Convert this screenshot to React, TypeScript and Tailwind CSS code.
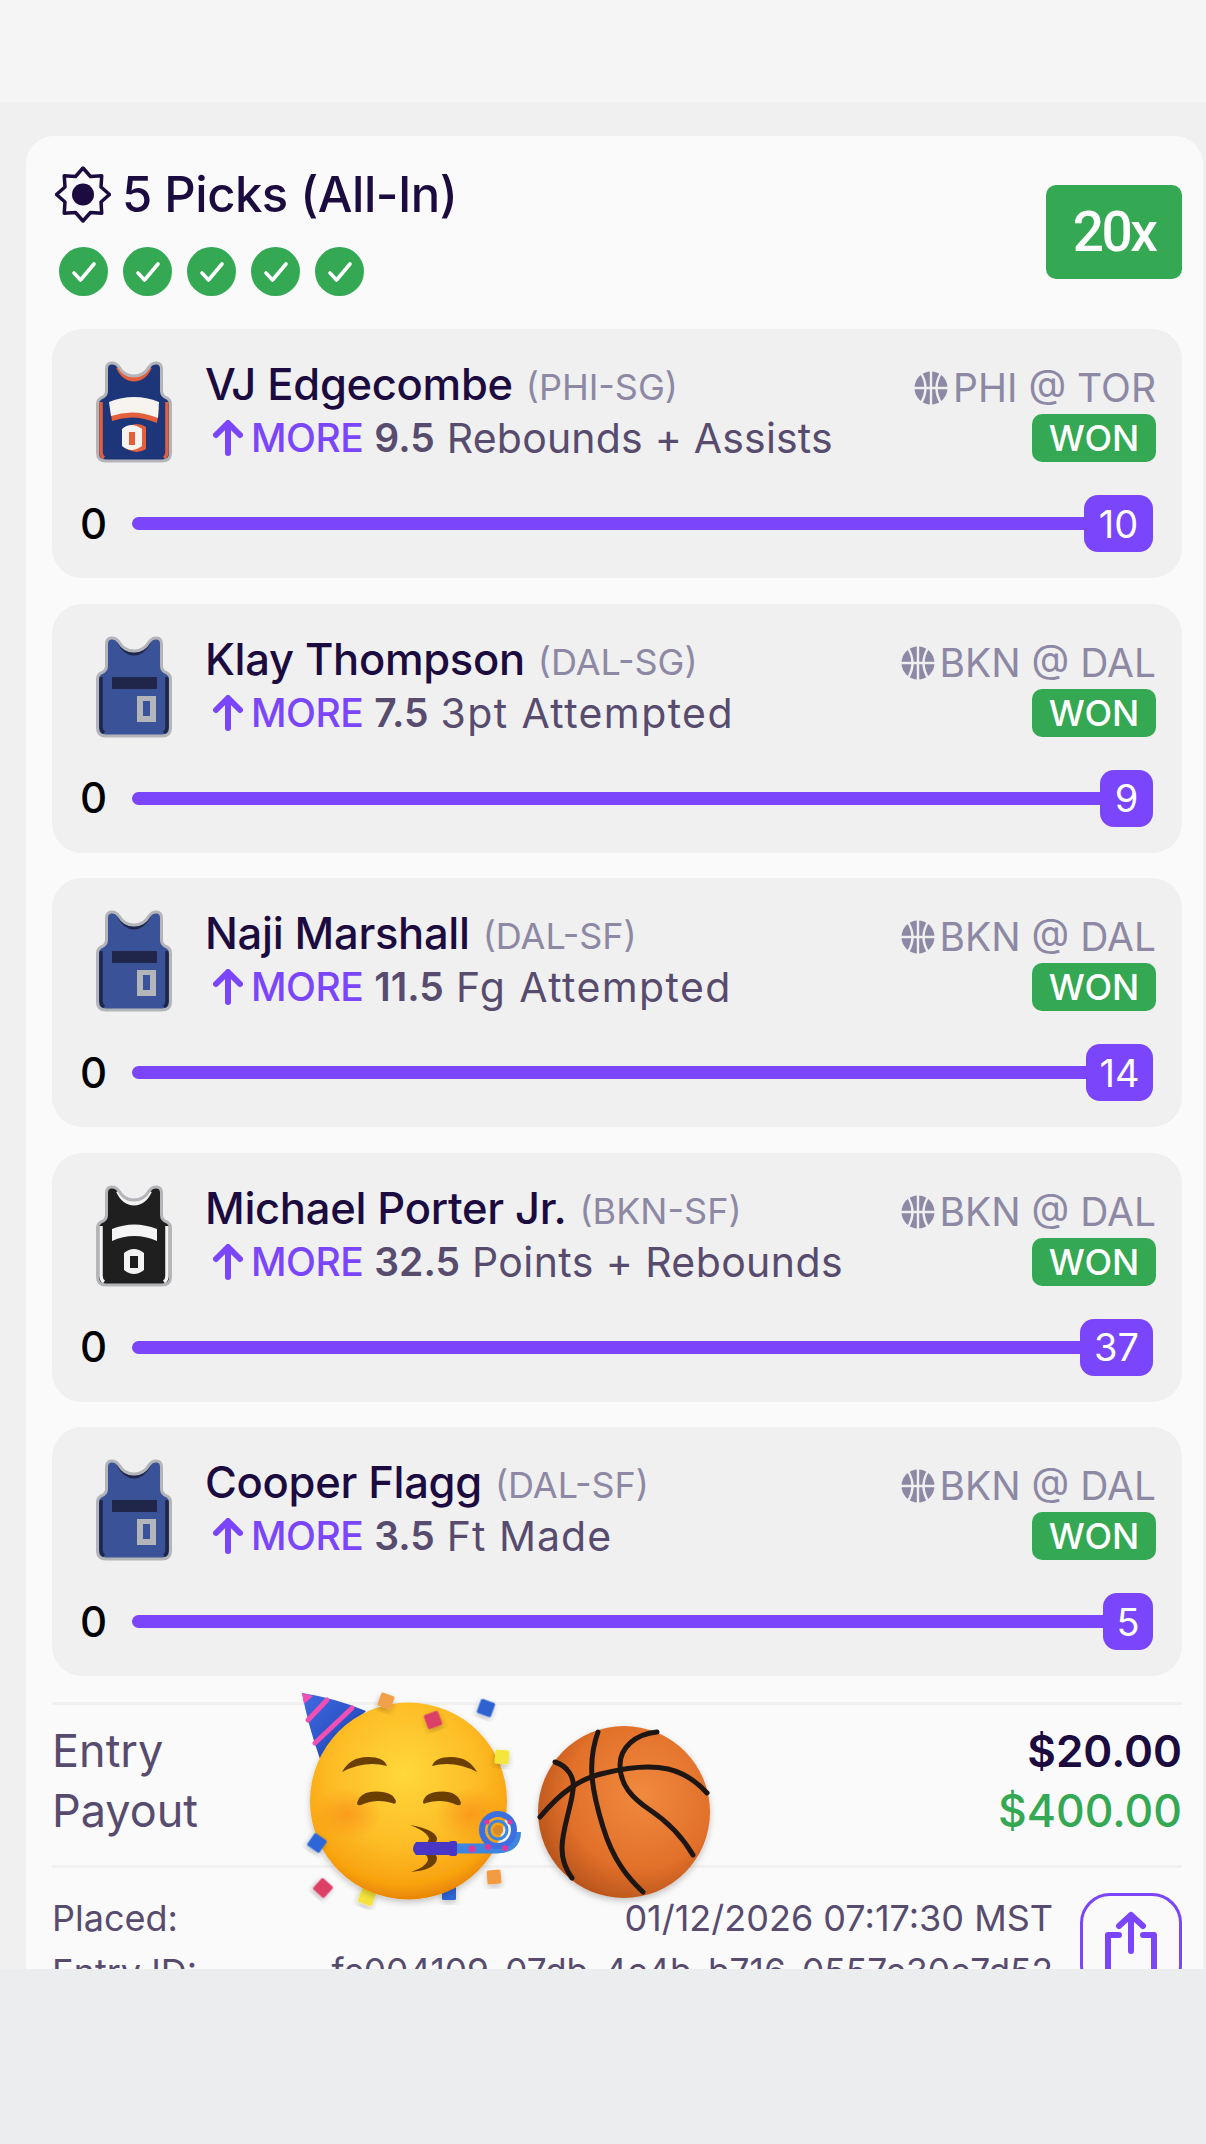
const INK = "#1b0b3f";

type Kit = "phi" | "dal" | "bkn";

function Jersey({ kit }: { kit: Kit }) {
  const body = kit === "phi" ? "#1d3579" : kit === "dal" ? "#3a5298" : "#1f1f1f";
  const side = kit === "phi" ? "#e4603c" : kit === "dal" ? "#20264a" : "#f4f4f4";
  const trim = kit === "phi" ? "#e4603c" : kit === "dal" ? "#20264a" : "#f4f4f4";
  const shape = "M15 2 Q20 1.5 23 6 Q28 15 38 15 Q48 15 53 6 Q56 1.5 61 2 Q65.5 2.5 65.5 8 L65.5 30 Q65.5 35 71 37 Q74.5 39 74.5 43 L74.5 92 Q74.5 100 66 100 L10 100 Q1.5 100 1.5 92 L1.5 43 Q1.5 39 5 37 Q10.5 35 10.5 30 L10.5 8 Q10.5 2.5 15 2 Z";
  return (
    <svg width="76" height="102" viewBox="0 0 76 102" className="shrink-0">
      <path d={shape} fill={body} />
      <path d="M5 41 V91 Q5 95 8 97" fill="none" stroke={side} strokeWidth="3.5" />
      <path d="M71 41 V91 Q71 95 68 97" fill="none" stroke={side} strokeWidth="3.5" />
      <path d="M22.5 6 Q28 18 38 18 Q48 18 53.5 6" fill="none" stroke={trim} strokeWidth={kit === "dal" ? 3 : 5} />
      {kit === "phi" && <path d="M24 5 Q29 14.5 38 14.5 Q47 14.5 52 5" fill="none" stroke="#f3efe8" strokeWidth="2.5" />}
      <path d={shape} fill="none" stroke="#b4b5b8" strokeWidth="3" />
      {kit === "dal" && <rect x="16" y="41" width="45" height="12" rx="1" fill="#20264a" />}
      {kit === "dal" && <path d="M41 60 H60 V86 H41 Z M47 65 V80 H54 V65 Z" fill="#b4b5b8" fillRule="evenodd" />}
      {kit === "phi" && <path d="M14 46 Q38 36 63 46 L61 62 Q38 52 16 60 Z" fill="#e4603c" />}
      {kit === "phi" && <path d="M13 41 Q38 31 63 41 L62 57 Q38 47 15 55 Z" fill="#f7f3ee" />}
      {kit === "phi" && <path d="M31 66 Q41 60 50 66 L50 88 Q41 94 31 88 Z" fill="#e4603c" />}
      {kit === "phi" && <path fillRule="evenodd" d="M26 68 Q35 60 46 68 L46 85 Q35 93 26 85 Z M33 71 V84 H39 V71 Z" fill="#f7f3ee" />}
      {kit === "bkn" && <path d="M16 44 Q38 35 61 44 L61 56 Q38 46 16 56 Z" fill="#f4f4f4" />}
      {kit === "bkn" && <path fillRule="evenodd" d="M28 68 Q38 60 48 68 L48 85 Q38 93 28 85 Z M34 71 V83 H42 V71 Z" fill="#f4f4f4" />}
    </svg>
  );
}

function Ball() {
  const bg = "#f0f0f1";
  return (
    <svg width="34" height="34" viewBox="0 0 34 34" className="shrink-0">
      <circle cx="17" cy="17" r="16.5" fill="#8d88a3" />
      <g stroke={bg} strokeWidth="2.4" fill="none">
        <path d="M17 0 V34 M0 17 H34" />
        <path d="M7 2 Q16 17 7 32 M27 2 Q18 17 27 32" />
      </g>
    </svg>
  );
}

function Check() {
  return (
    <div className="flex h-[49px] w-[49px] items-center justify-center rounded-full bg-[#34a853]">
      <svg width="26" height="22" viewBox="0 0 26 22" fill="none">
        <path d="M3 12 L9.5 19 L23 3" stroke="#fff" strokeWidth="3.6" strokeLinecap="round" strokeLinejoin="round" />
      </svg>
    </div>
  );
}

function Star() {
  const pts: string[] = [];
  for (let i = 0; i < 16; i++) {
    const r = i % 2 === 0 ? 26.5 : 19.5;
    const a = (Math.PI * i) / 8 - Math.PI / 2;
    pts.push(`${28 + r * Math.cos(a)},${28.5 + r * Math.sin(a)}`);
  }
  return (
    <svg width="56" height="57" viewBox="0 0 56 57" className="shrink-0">
      <polygon points={pts.join(" ")} fill="none" stroke={INK} strokeWidth="3.5" strokeLinejoin="round" />
      <circle cx="28" cy="28.5" r="11" fill={INK} />
    </svg>
  );
}

type Pick = { name: string; team: string; kit: Kit; game: string; line: string; stat: string; statClass: string; val: string; thumb: string };

const picks: Pick[] = [
  { name: "VJ Edgecombe", team: "(PHI-SG)", kit: "phi", game: "PHI @ TOR", line: "9.5", stat: "Rebounds + Assists", statClass: "tracking-[0.2px]", val: "10", thumb: "w-[69px]" },
  { name: "Klay Thompson", team: "(DAL-SG)", kit: "dal", game: "BKN @ DAL", line: "7.5", stat: "3pt Attempted", statClass: "tracking-[1.4px]", val: "9", thumb: "w-[53px]" },
  { name: "Naji Marshall", team: "(DAL-SF)", kit: "dal", game: "BKN @ DAL", line: "11.5", stat: "Fg Attempted", statClass: "tracking-[1.4px]", val: "14", thumb: "w-[67px]" },
  { name: "Michael Porter Jr.", team: "(BKN-SF)", kit: "bkn", game: "BKN @ DAL", line: "32.5", stat: "Points + Rebounds", statClass: "tracking-[0.4px]", val: "37", thumb: "w-[73px]" },
  { name: "Cooper Flagg", team: "(DAL-SF)", kit: "dal", game: "BKN @ DAL", line: "3.5", stat: "Ft Made", statClass: "tracking-[1px]", val: "5", thumb: "w-[50px]" },
];

function PickCard({ p }: { p: Pick }) {
  return (
    <div className="flex h-[249px] flex-col rounded-[30px] bg-[#f0f0f1] pt-[32px]">
      <div className="flex h-[134px] pl-[44px] pr-[26px]">
        <Jersey kit={p.kit} />
        <div className="-mt-[4px] ml-[33px] min-w-0 flex-1 whitespace-nowrap">
          <div className="flex h-[54px] items-baseline leading-[54px]">
            <span className="text-[43.5px] font-medium tracking-[-0.3px] text-[#1b0b3f]">{p.name}</span>
            <span className="ml-[13px] text-[36px] text-[#8d88a3]">{p.team}</span>
          </div>
          <div className="flex h-[54px] items-center leading-[54px] text-[41px] text-[#574b6e]">
            <svg width="30" height="36" viewBox="0 0 30 36" fill="none" className="ml-[8px] shrink-0">
              <path d="M15 33 V4 M3 15 L15 3 L27 15" stroke="#7a45fb" strokeWidth="6" strokeLinecap="round" strokeLinejoin="round" />
            </svg>
            <span className="ml-[8px] text-[39px] font-medium tracking-[-0.5px] text-[#7a45fb]">MORE</span>
            <span className="ml-[11px] text-[39px] font-semibold">{p.line}</span>
            <span className={`ml-[12px] ${p.statClass}`}>{p.stat}</span>
          </div>
        </div>
        <div className="mt-[8px] flex flex-col items-end whitespace-nowrap">
          <div className="flex h-[38px] items-center gap-[5px] text-[39px] leading-[38px] text-[#8d88a3]">
            <Ball />
            <span>{p.game}</span>
          </div>
          <div className="mt-[7px] flex h-[48px] w-[124px] items-center justify-center rounded-[10px] bg-[#34a853] text-[36px] font-medium leading-none text-white">
            WON
          </div>
        </div>
      </div>
      <div className="flex h-[57px] items-center pl-[28px] pr-[29px]">
        <span className="w-[52px] text-[42px] font-medium leading-none text-black">0</span>
        <div className="h-[13px] flex-1 rounded-l-full bg-[#7a45fb]" />
        <div className={`flex h-[57px] items-center justify-center rounded-[14px] bg-[#7a45fb] text-[38px] leading-none text-white ${p.thumb}`}>
          {p.val}
        </div>
      </div>
    </div>
  );
}

function Emojis() {
  const under: [number, number, number, string, number][] = [
    [367, 1897, 15, "#f5e33c", 20],
    [449, 1893, 14, "#2f66d8", 0],
  ];
  const over: [number, number, number, string, number][] = [
    [386, 1701, 14, "#f2a04a", 20],
    [486, 1708, 15, "#2f62d0", 20],
    [433, 1720, 15, "#dc3f66", -20],
    [502, 1757, 14, "#f5e63c", 5],
    [317, 1843, 15, "#2f66d8", 35],
    [494, 1877, 14, "#f29b3f", -5],
    [323, 1888, 15, "#dc3f66", 42],
  ];
  const box = ([x, y, s, c, r]: [number, number, number, string, number], i: number) => (
    <rect
      key={i}
      x={x - s / 2}
      y={y - s / 2}
      width={s}
      height={s}
      rx="1.5"
      fill={c}
      transform={`rotate(${r} ${x} ${y})`}
      filter="url(#soft)"
    />
  );
  return (
    <svg className="pointer-events-none absolute left-[290px] top-[1685px]" width="440" height="225" viewBox="290 1685 440 225">
      <defs>
        <radialGradient id="face" cx="48%" cy="36%" r="64%">
          <stop offset="0%" stopColor="#ffd83a" />
          <stop offset="58%" stopColor="#fdbc26" />
          <stop offset="88%" stopColor="#f8a30f" />
          <stop offset="100%" stopColor="#e98404" />
        </radialGradient>
        <radialGradient id="cheekL">
          <stop offset="0%" stopColor="#f98a17" stopOpacity="0.65" />
          <stop offset="100%" stopColor="#f98a17" stopOpacity="0" />
        </radialGradient>
        <radialGradient id="ball" cx="60%" cy="40%" r="66%">
          <stop offset="0%" stopColor="#f08a3e" />
          <stop offset="65%" stopColor="#e2702a" />
          <stop offset="100%" stopColor="#b5531b" />
        </radialGradient>
        <linearGradient id="hat" x1="0" y1="0" x2="1" y2="1">
          <stop offset="0%" stopColor="#3f6ce0" />
          <stop offset="100%" stopColor="#1d3fb4" />
        </linearGradient>
        <filter id="soft" x="-30%" y="-30%" width="160%" height="160%">
          <feDropShadow dx="0" dy="3" stdDeviation="3" floodColor="#000" floodOpacity="0.22" />
        </filter>
      </defs>

      <circle cx="624" cy="1812" r="86" fill="url(#ball)" filter="url(#soft)" />
      <g fill="none" stroke="#1e1612" strokeWidth="5" strokeLinecap="round">
        <path d="M598 1732 C588 1760 590 1785 603 1827 C613 1860 628 1878 643 1892" />
        <path d="M540 1817 C560 1793 580 1778 605 1773 C625 1768 650 1765 668 1769 C685 1773 698 1783 707 1793" />
        <path d="M555 1762 C568 1766 575 1778 573 1790 C571 1808 562 1830 562 1848 C562 1860 566 1870 572 1878" />
        <path d="M657 1732 C635 1734 620 1748 620 1765 C620 1785 632 1798 650 1810 C668 1822 683 1838 693 1855" />
      </g>

      <path d="M302 1693 Q335 1698 366 1711 L320 1759 Q308 1725 302 1693 Z" fill="url(#hat)" />
      <path d="M302 1693 L313 1696 L304 1704 Z" fill="#f04fb4" />
      <path d="M308 1720 L327 1700 M315 1743 L352 1708" stroke="#f04fb4" strokeWidth="5" strokeLinecap="round" />
      {under.map(box)}
      <circle cx="408.5" cy="1801" r="98.5" fill="url(#face)" filter="url(#soft)" />
      <ellipse cx="347" cy="1814" rx="34" ry="26" fill="url(#cheekL)" />
      <ellipse cx="470" cy="1814" rx="34" ry="26" fill="url(#cheekL)" />
      <g fill="#6b3f00">
        <path d="M342 1772 Q350 1757 368 1757 Q384 1757 387 1766 Q365 1760 342 1772 Z" />
        <path d="M432 1766 Q435 1757 451 1757 Q469 1757 477 1772 Q454 1760 432 1766 Z" />
        <path d="M357 1803 Q360 1791.5 376 1791.5 Q394 1791.5 396 1802 Q395 1805 392 1803 Q376 1798 361 1805 Q357 1806 357 1803 Z" />
        <path d="M423 1802 Q425 1791.5 442 1791.5 Q458 1791.5 461 1803 Q461 1806 457 1805 Q442 1798 426 1803 Q423 1805 423 1802 Z" />
        <path d="M410 1825 Q438 1830 437 1840 Q435 1847 422 1849 Q437 1851 437 1859 Q435 1870 411 1872 Q426 1867 428 1860 Q428 1853 414 1849 Q428 1845 429 1839 Q428 1832 410 1825 Z" />
      </g>
      {over.map(box)}
      <path d="M457 1848.5 H497 Q516 1848 516 1832" fill="none" stroke="#3c86e0" strokeWidth="10" />
      <path d="M416 1842 H450 V1855 H416 Q410 1848.5 416 1842 Z" fill="#4a36c4" />
      <rect x="449" y="1841" width="8" height="15" rx="2" fill="#4a36c4" />
      <circle cx="498" cy="1830" r="16" fill="none" stroke="#3c6fe0" strokeWidth="6" />
      <circle cx="498" cy="1830" r="9" fill="none" stroke="#3c86e0" strokeWidth="3" />
      <circle cx="498" cy="1830" r="5" fill="#d98a2b" />
      <circle cx="472" cy="1849" r="3.5" fill="#e0369f" />
      <circle cx="488" cy="1847" r="3" fill="#e0369f" />
      <circle cx="505" cy="1848" r="3" fill="#e0369f" />
      <circle cx="487" cy="1822" r="2.5" fill="#e0369f" />
      <circle cx="510" cy="1822" r="2.5" fill="#e0369f" />
    </svg>
  );
}

export default function App() {
  return (
    <div className="relative flex h-[2144px] w-[1206px] flex-col overflow-hidden bg-[#ecedef] font-['Inter','Liberation_Sans',sans-serif]">
      <div className="h-[102px] shrink-0 bg-[#f5f5f5]" />
      <div className="h-[1867px] shrink-0 overflow-hidden bg-[#f0f0f0] pl-[26px] pr-[3px] pt-[34px]">
        <div className="rounded-t-[28px] bg-[#fafafa] pb-[40px] pl-[26px] pr-[21px]">
          <div className="flex h-[193px] justify-between">
            <div className="pl-[3px] pt-[30px]">
              <div className="flex items-center gap-[11px]">
                <Star />
                <span className="text-[49px] font-medium leading-[57px] tracking-[-0.5px] text-[#1b0b3f]">5 Picks (All-In)</span>
              </div>
              <div className="mt-[24px] flex gap-[15px] pl-[4px]">
                <Check />
                <Check />
                <Check />
                <Check />
                <Check />
              </div>
            </div>
            <div className="pt-[49px]">
              <div className="flex h-[94px] w-[136px] items-center justify-center rounded-[10px] bg-[#34a853] font-['Roboto',sans-serif] text-[55px] font-medium leading-none tracking-[-2.5px] text-white">
                20x
              </div>
            </div>
          </div>
          <div className="flex flex-col gap-[25.5px]">
            {picks.map((p) => (
              <PickCard key={p.name} p={p} />
            ))}
          </div>
          <div className="mt-[26px] h-[3px] bg-[#f1f1f1]" />
          <div className="flex h-[160px] items-center justify-between pb-[8px]">
            <div className="text-[45px] leading-[60px] text-[#574b6e]">
              <div>Entry</div>
              <div>Payout</div>
            </div>
            <div className="text-right leading-[60px]">
              <div className="text-[44px] font-semibold text-[#1b0b3f]">$20.00</div>
              <div className="text-[44.5px] font-medium text-[#34a853]">$400.00</div>
            </div>
          </div>
          <div className="h-[3px] bg-[#f1f1f1]" />
          <div className="flex gap-[27px] pt-[25px]">
            <div className="-mt-[2px] flex-1 text-[36px] leading-[54px] text-[#574b6e]">
              <div className="flex justify-between">
                <span>Placed:</span>
                <span>01/12/2026 07:17:30 MST</span>
              </div>
              <div className="flex justify-between whitespace-nowrap">
                <span>Entry ID:</span>
                <span className="text-[35.3px]">fc004109-07db-4c4b-b716-0557e30c7d52</span>
              </div>
            </div>
            <div className="flex h-[102px] w-[102px] shrink-0 justify-center rounded-[30px] border-[3px] border-[#7a45fb] pt-[15px]">
              <svg width="58" height="80" viewBox="0 0 58 80" fill="none">
                <path d="M29 40 V4 M17 15 L29 4 L41 15" stroke="#7a45fb" strokeWidth="6" strokeLinecap="round" strokeLinejoin="round" />
                <path d="M17 24 H6 V70 H52 V24 H41" stroke="#7a45fb" strokeWidth="6" strokeLinecap="round" strokeLinejoin="round" />
              </svg>
            </div>
          </div>
        </div>
      </div>
      <Emojis />
    </div>
  );
}
